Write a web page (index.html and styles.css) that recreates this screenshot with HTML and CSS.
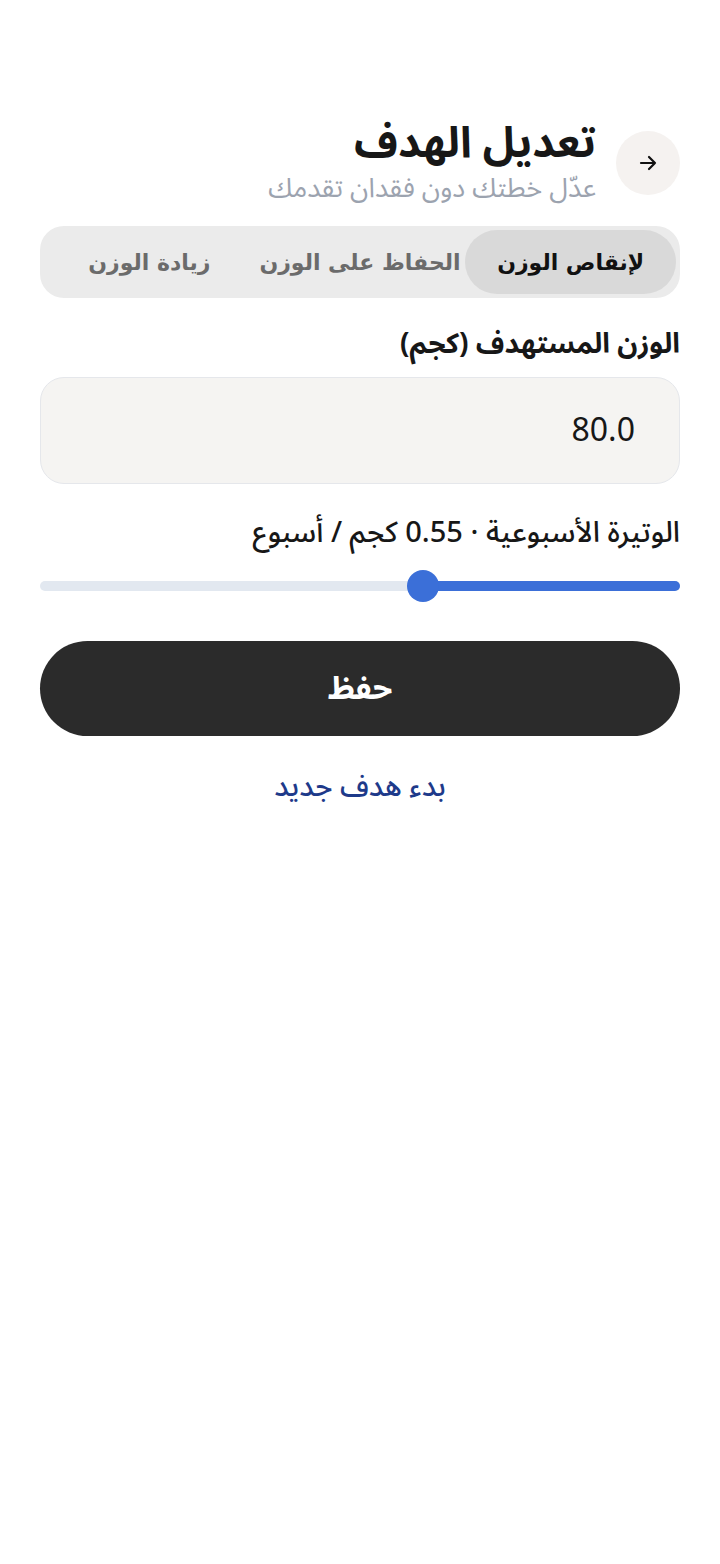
FILE: index.html
```html
<!DOCTYPE html>
<html lang="ar" dir="rtl">
<head>
<meta charset="utf-8">
<link rel="stylesheet" href="styles.css">
</head>
<body>
<main class="page">
  <header class="header">
    <button class="back" aria-label="رجوع">
      <svg width="20" height="20" viewBox="0 0 20 20" fill="none" stroke="#111" stroke-width="2.2" stroke-linecap="round" stroke-linejoin="round"><path d="M3 10h14M11 4l6 6-6 6"/></svg>
    </button>
    <div class="titles">
      <h1 class="title">تعديل الهدف</h1>
      <p class="subtitle">عدّل خطتك دون فقدان تقدمك</p>
    </div>
  </header>

  <div class="tabs">
    <div class="tab active">لإنقاص الوزن</div>
    <div class="tab">الحفاظ على الوزن</div>
    <div class="tab">زيادة الوزن</div>
  </div>

  <label class="label">الوزن المستهدف (كجم)</label>
  <div class="input">80.0</div>

  <div class="label pace">الوتيرة الأسبوعية · 0.55 كجم / أسبوع</div>
  <div class="slider">
    <div class="track"><div class="fill" style="width:40.2%"></div></div>
    <div class="thumb" style="right:40.2%"></div>
  </div>

  <button class="save">حفظ</button>
  <a class="link">بدء هدف جديد</a>
</main>
</body>
</html>
```
FILE: styles.css
```css
html, body { margin: 0; padding: 0; background: #fff; }
body { font-family: "Noto Sans Arabic", "Noto Sans", "DejaVu Sans", sans-serif; color: #171717; }
.page { padding: 118px 40px 0; display: flex; flex-direction: column; }
.header { display: flex; align-items: flex-start; gap: 20px; }
.back { width: 64px; height: 64px; border-radius: 50%; border: none; background: #f5f2f0; display: flex; align-items: center; justify-content: center; margin-top: 13px; padding: 0; }
.titles { display: flex; flex-direction: column; }
.title { margin: 0; font-size: 43px; font-weight: 700; line-height: 52px; color: #171717; }
.subtitle { margin: 2px 0 0; font-size: 27px; line-height: 34px; color: #9ca3af; }
.tabs { margin-top: 20px; background: #ebebeb; border-radius: 24px; padding: 4px; display: grid; grid-template-columns: 1fr 1fr 1fr; height: 64px; }
.tab { display: flex; align-items: center; justify-content: center; font-family: "DejaVu Sans", sans-serif; font-size: 22px; font-weight: 700; color: #6b6b6b; border-radius: 32px; }
.tab.active { background: #d9d9d9; color: #111; }
.label { font-size: 28px; font-weight: 700; margin-top: 30px; line-height: 34px; }
.input { box-sizing: border-box; margin-top: 15px; height: 107px; border: 1px solid #e5e7eb; border-radius: 24px; background: #f5f4f2; display: flex; align-items: center; padding: 0 44px; font-size: 32px; color: #171717; }
.pace { margin-top: 31px; font-weight: 500; font-size: 29px; line-height: 36px; }
.slider { position: relative; margin-top: 19px; height: 32px; display: flex; align-items: center; }
.track { width: 100%; height: 10px; border-radius: 5px; background: #e2e8f0; position: relative; }
.fill { position: absolute; right: 0; top: 0; bottom: 0; background: #3b6fd8; border-radius: 5px; }
.thumb { position: absolute; top: 0; width: 32px; height: 32px; border-radius: 50%; background: #3b6fd8; margin-right: -16px; }
.save { margin-top: 39px; height: 95px; border: none; border-radius: 48px; background: #2b2b2b; color: #fff; font-family: inherit; font-size: 32px; font-weight: 700; }
.link { margin-top: 20px; align-self: center; color: #1e3a8a; font-size: 29px; font-weight: 500; }
```
